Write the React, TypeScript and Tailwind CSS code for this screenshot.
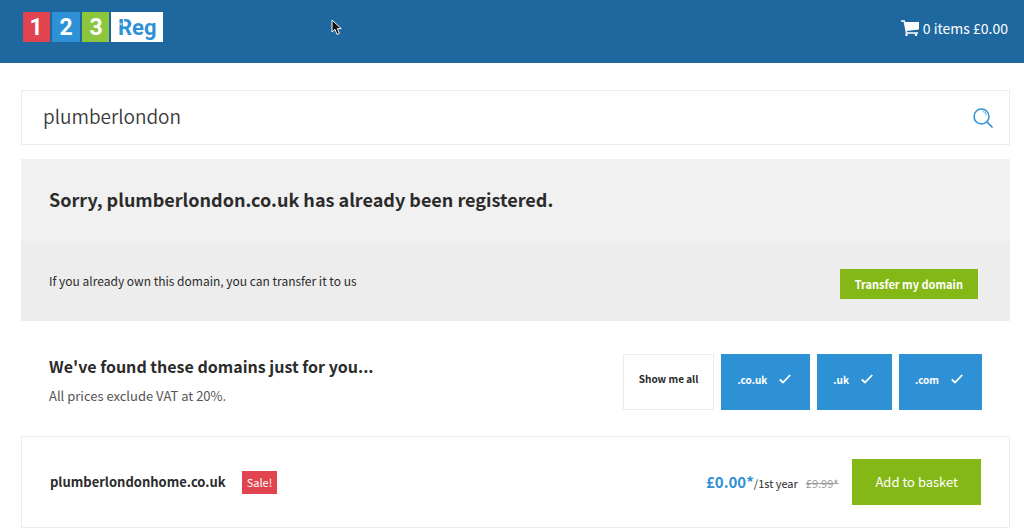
import { useState } from "react";

const extensions = [".co.uk", ".uk", ".com"];

const results = [
  { name: "plumberlondonhome.co.uk", sale: true, price: "£0.00*", term: "/1st year", was: "£9.99*" },
];

function Logo() {
  return (
    <a href="#" aria-label="123 Reg" className="block">
      <svg width="140" height="30" viewBox="0 0 140 30" className="font-['Roboto',sans-serif] font-bold">
        <rect width="27" height="30" fill="#e2444f" />
        <rect x="29" width="28" height="30" fill="#2f91d5" />
        <rect x="59" width="27" height="30" fill="#8cc63f" />
        <rect x="88" width="52" height="30" fill="#fff" />
        <g fill="#fff" fontSize="23" textAnchor="middle">
          <text x="13" y="23">1</text>
          <text x="43" y="23">2</text>
          <text x="73" y="23">3</text>
        </g>
        <text x="95" y="23" fill="#2f91d5" fontSize="22">Reg</text>
        <path d="M95 12h4M100.5 6v4.5" stroke="#fff" strokeWidth="1.2" />
      </svg>
    </a>
  );
}

function CartIcon() {
  return (
    <svg width="18" height="16" viewBox="0 0 18 16" fill="none" aria-hidden="true">
      <path d="M3.5 2H18v7.5L5.5 11z" fill="#fff" />
      <path d="M0 1h3.2L5.5 13H17" stroke="#fff" strokeWidth="1.4" />
      <circle cx="5.5" cy="14.7" r="1.3" fill="#fff" />
      <circle cx="15" cy="14.7" r="1.3" fill="#fff" />
    </svg>
  );
}

function SearchIcon() {
  return (
    <svg width="20" height="20" viewBox="0 0 20 20" fill="none" stroke="#2f91d5" strokeLinecap="round" aria-hidden="true">
      <circle cx="8.5" cy="8.5" r="7.5" strokeWidth="1.5" />
      <path d="M14 14l5 5" strokeWidth="1.7" />
      <path d="M10 3.5c1.8.4 2.9 1.6 3.3 3.3" strokeWidth="1.5" opacity=".5" />
    </svg>
  );
}

function CheckIcon() {
  return (
    <svg width="12" height="10" viewBox="0 0 12 10" fill="none" stroke="#fff" strokeWidth="1.8" aria-hidden="true">
      <path d="M.8 5.5l3.2 3L11.2 1" />
    </svg>
  );
}

function Pointer() {
  return (
    <svg width="12" height="17" viewBox="0 0 12 17" className="absolute top-[19px] left-[331px]" aria-hidden="true">
      <path d="M1 1v12l3-2.6 2 5 2.4-1-2.1-4.8h4z" fill="#111" stroke="#fff" strokeWidth="1" />
    </svg>
  );
}

function SiteHeader() {
  return (
    <header className="relative flex h-[63px] items-start justify-between bg-[#1f689f] pt-3 pr-4 pl-[23px]">
      <Logo />
      <Pointer />
      <a href="#" className="mt-0.5 flex items-center gap-1 text-sm leading-7 text-white">
        <CartIcon />
        0 items £0.00
      </a>
    </header>
  );
}

export default function App() {
  const [query, setQuery] = useState("plumberlondon");
  const [selected, setSelected] = useState(extensions);

  const toggle = (ext: string) =>
    setSelected(selected.includes(ext) ? selected.filter((e) => e !== ext) : [...selected, ext]);

  return (
    <div className="bg-white font-['Noto_Sans_CJK_SC',sans-serif] text-[#2b2b2b]">
      <SiteHeader />
      <main className="pt-[27px] pr-[14px] pl-[21px]">
        <form onSubmit={(e) => e.preventDefault()} className="flex h-[55px] items-center border border-[#ececec] pr-4 pl-[21px]">
          <input
            type="text"
            aria-label="Search domains"
            value={query}
            onChange={(e) => setQuery(e.target.value)}
            className="min-w-0 flex-1 pb-1 text-[19px] leading-7 font-[350] text-[#3a3a3a] outline-none"
          />
          <button type="submit" aria-label="Search">
            <SearchIcon />
          </button>
        </form>

        <section className="mt-[14px]">
          <div className="bg-[#f1f1f1] px-7 pt-[25px] pb-[27px]">
            <h1 className="text-lg leading-[30px] font-bold">Sorry, plumberlondon.co.uk has already been registered.</h1>
          </div>
          <div className="flex items-start justify-between bg-[#ededed] pt-7 pr-8 pb-[22px] pl-7">
            <p className="text-xs leading-6">If you already own this domain, you can transfer it to us</p>
            <button type="button" className="h-[30px] bg-[#84b816] px-[15px] text-[11px] font-bold text-white">
              Transfer my domain
            </button>
          </div>
        </section>

        <section className="flex items-start justify-between pt-[33px] pr-7 pb-[26px] pl-7">
          <div>
            <h2 className="text-base leading-6 font-bold">We've found these domains just for you...</h2>
            <p className="mt-1 text-[13px] leading-7 text-[#555]">All prices exclude VAT at 20%.</p>
          </div>
          <div className="flex gap-[7px]">
            <button
              type="button"
              onClick={() => setSelected(extensions)}
              className="h-14 border border-[#ececec] px-[15px] pb-2 text-[10px] font-bold"
            >
              Show me all
            </button>
            {extensions.map((ext) => (
              <button
                key={ext}
                type="button"
                aria-pressed={selected.includes(ext)}
                onClick={() => toggle(ext)}
                className="flex h-14 items-center gap-3 bg-[#2f91d5] pr-[19px] pb-1.5 pl-4 text-[10px] font-bold text-white"
              >
                {ext}
                {selected.includes(ext) && <CheckIcon />}
              </button>
            ))}
          </div>
        </section>

        <ul>
          {results.map((result) => (
            <li key={result.name} className="flex items-center justify-between border border-[#ececec] py-[22px] pr-7 pl-7">
              <div className="flex items-center gap-4">
                <h3 className="text-[13px] leading-6 font-bold">{result.name}</h3>
                {result.sale && <span className="bg-[#e2444f] px-[5px] text-[11px] leading-[23px] text-white">Sale!</span>}
              </div>
              <div className="flex items-center gap-[14px]">
                <p className="flex items-baseline text-[11px] leading-6">
                  <strong className="text-[15px] leading-6 text-[#2f91d5]">{result.price}</strong>
                  {result.term}
                  <s className="ml-2 text-[#999]">{result.was}</s>
                </p>
                <button type="button" className="h-[46px] bg-[#84b816] px-[23px] text-[13px] text-white">
                  Add to basket
                </button>
              </div>
            </li>
          ))}
        </ul>
      </main>
    </div>
  );
}
